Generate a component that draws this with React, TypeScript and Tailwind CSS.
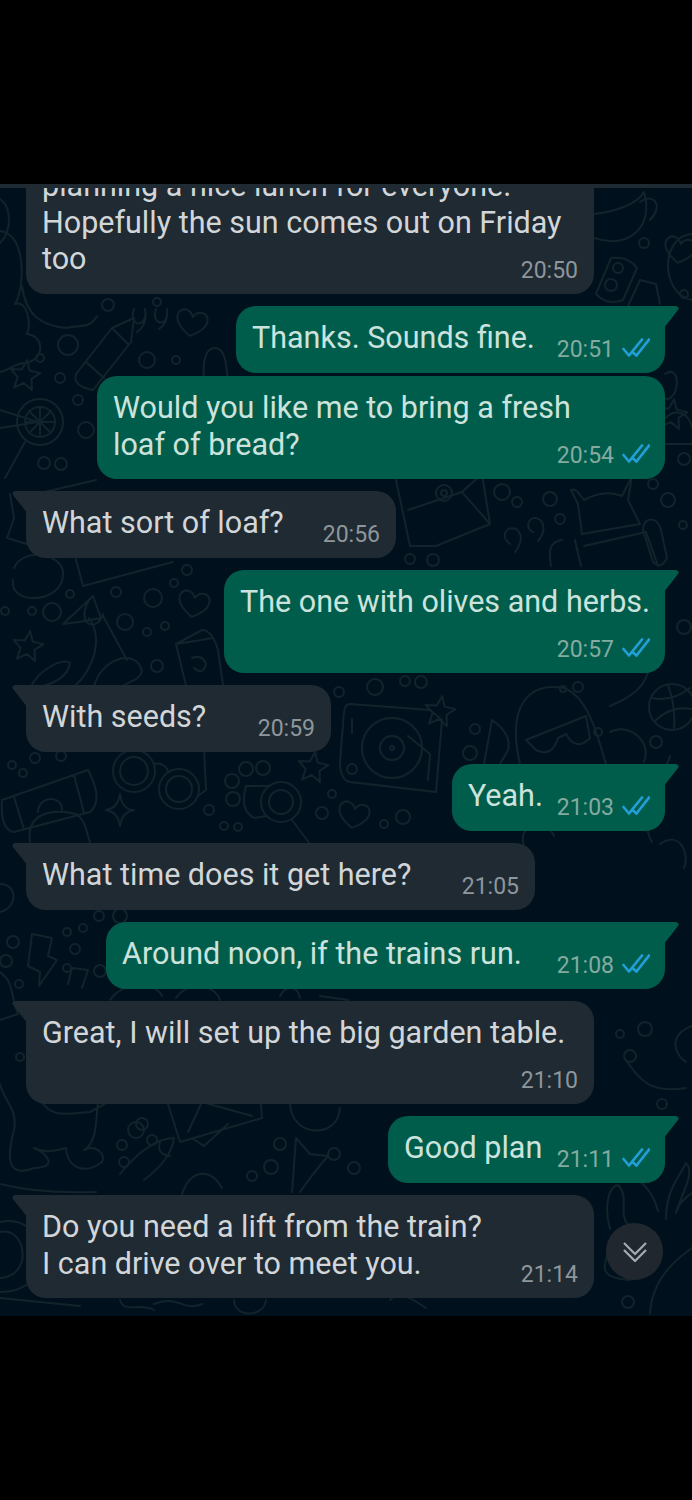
import { clsx } from 'clsx';

type Message = {
  lines: string[];
  time: string;
  mine?: boolean;
  tail?: boolean;
  size: string;
  gap: string;
};

const messages: Message[] = [
  { lines: ['planning a nice lunch for everyone.', 'Hopefully the sun comes out on Friday', 'too'], time: '20:50', size: 'w-[568px] h-[140px]', gap: '-mt-[30px]' },
  { lines: ['Thanks. Sounds fine.'], time: '20:51', mine: true, tail: true, size: 'w-[429px] h-[67px]', gap: 'mt-3' },
  { lines: ['Would you like me to bring a fresh', 'loaf of bread?'], time: '20:54', mine: true, size: 'w-[568px] h-[103px]', gap: 'mt-[3px]' },
  { lines: ['What sort of loaf?'], time: '20:56', tail: true, size: 'w-[370px] h-[67px]', gap: 'mt-3' },
  { lines: ['The one with olives and herbs.'], time: '20:57', mine: true, tail: true, size: 'w-[441px] h-[103px]', gap: 'mt-3' },
  { lines: ['With seeds?'], time: '20:59', tail: true, size: 'w-[305px] h-[67px]', gap: 'mt-3' },
  { lines: ['Yeah.'], time: '21:03', mine: true, tail: true, size: 'w-[213px] h-[67px]', gap: 'mt-3' },
  { lines: ['What time does it get here?'], time: '21:05', tail: true, size: 'w-[509px] h-[67px]', gap: 'mt-3' },
  { lines: ['Around noon, if the trains run.'], time: '21:08', mine: true, tail: true, size: 'w-[559px] h-[67px]', gap: 'mt-3' },
  { lines: ['Great, I will set up the big garden table.'], time: '21:10', tail: true, size: 'w-[568px] h-[103px]', gap: 'mt-3' },
  { lines: ['Good plan'], time: '21:11', mine: true, tail: true, size: 'w-[277px] h-[67px]', gap: 'mt-3' },
  { lines: ['Do you need a lift from the train?', 'I can drive over to meet you.'], time: '21:14', tail: true, size: 'w-[568px] h-[103px]', gap: 'mt-3' },
];

// small bubbles scattered between the doodles: x, y, radius
const dots = [
  [108, 121, 6], [68, 161, 10], [157, 118, 4], [147, 176, 8], [176, 176, 4], [60, 194, 5], [78, 216, 5], [86, 246, 8],
  [44, 279, 6], [61, 280, 6], [40, 174, 4], [299, 59, 5], [308, 79, 3], [644, 59, 5], [684, 110, 4], [684, 275, 6],
  [502, 308, 8], [517, 318, 5], [550, 315, 7], [560, 335, 5], [653, 300, 5], [668, 316, 7], [683, 341, 4], [410, 375, 5],
  [433, 376, 6], [70, 410, 4], [116, 408, 5], [153, 414, 9], [52, 428, 9], [32, 427, 4], [5, 427, 4], [125, 438, 8],
  [147, 448, 4], [165, 442, 4], [157, 482, 6], [187, 386, 5], [174, 399, 4], [375, 503, 8], [405, 497, 5], [421, 498, 6],
  [475, 545, 5], [470, 569, 7], [578, 503, 5], [563, 505, 3], [598, 548, 4], [656, 558, 6], [684, 443, 7], [339, 508, 5],
  [35, 574, 5], [61, 572, 5], [12, 581, 4], [23, 589, 4], [209, 626, 5], [224, 642, 4], [238, 643, 4], [322, 629, 6],
  [332, 610, 4], [352, 585, 5], [384, 640, 4], [403, 633, 7], [99, 732, 5], [120, 732, 7], [67, 748, 4], [83, 744, 4],
  [13, 758, 6], [6, 777, 6], [75, 765, 5], [67, 784, 4], [100, 787, 6], [19, 800, 4], [20, 873, 4], [142, 940, 6],
  [136, 946, 8], [152, 956, 5], [122, 961, 5], [124, 978, 5], [280, 960, 6], [271, 983, 7], [252, 992, 5], [334, 970, 6],
  [354, 984, 6], [628, 1118, 6], [662, 920, 5], [630, 872, 6], [620, 850, 4], [645, 845, 7],
];

const stars = [[25, 191], [28, 462], [313, 583], [440, 527], [672, 230]];
const hearts = [[192, 138], [194, 419], [354, 630], [680, 65]];

function Doodles() {
  return (
    <svg className="absolute inset-0 h-full w-full" viewBox="0 0 692 1132" fill="none" stroke="#11242b" strokeWidth="2" strokeLinecap="round" strokeLinejoin="round">
      {dots.map(([x, y, r], i) => <circle key={i} cx={x} cy={y} r={r} />)}
      {stars.map(([x, y], i) => (
        <path key={i} transform={`translate(${x} ${y}) rotate(8)`} d="M0-15 4-5 15-4 7 3 9 14 0 8-9 14-7 3-15-4-4-5Z" />
      ))}
      {hearts.map(([x, y], i) => (
        <path key={i} transform={`translate(${x} ${y}) rotate(10)`} d="M0 14C-10 8-17 1-15-6-12-14-3-12 0-5 3-12 13-13 15-5 16 2 9 9 0 14Z" />
      ))}
      {/* cloud and curls by the first bubble */}
      <path d="M0 15c12 8 12 32 0 44M0 47c28 3 24 60 15 73 13-4 16 20 12 30 18 2 18 26-2 29-10 0-17 8-25 9M22 102c4 30 20 40 45 42 12-4 22 2 30-12" />
      <path d="M134 125c-6 14 8 20 11 8m0-8c2 12-2 19-8 23M156 125c-5 14 8 18 11 8m0-8c1 12-3 17-8 20" />
      {/* crayon */}
      <path d="m76 190 36-46 22-10-3 24-38 48q-21-4-17-16Zm10-12 18 16m8-50 16 16" />
      <path d="M205 204c-4-28 1-40 10-40s12 12 13 40" />
      {/* bike wheel */}
      <circle cx="40" cy="238" r="23" /><circle cx="40" cy="238" r="15" />
      <path d="M40 223v30m-15-15h30M29 227l22 22m0-22-22 22M0 226l38 12-38 6m26 12L5 294" />
      {/* mug and traffic shapes on the right */}
      <path d="M594 30c20-2 44-10 50-22 10 34-14 58-50 46M640 18c14-10 24 4 10 18" />
      <path d="m596 110 15-36q18-2 26 10l-14 32q-16 6-27-6Zm32 12 12-26 16 4 4 20M692 50c-32 2-32 60 0 66" />
      <circle cx="618" cy="84" r="5" /><circle cx="611" cy="101" r="6" />
      <path d="M665 190c18-12 14 32-2 24m3 20c12-14 32 0 26 26h-26" />
      {/* parcel */}
      <path d="m396 296 14 66h26l54-22-8-50-20 18-54 18m54-18 28 32" />
      <circle cx="444" cy="309" r="8" /><circle cx="444" cy="309" r="3" />
      <path d="M515 368c7-9 8-18 1-23-10-4-16 8-6 15m28-3c8-9 7-21-2-23-8-1-11 10-3 14" />
      {/* robot */}
      <path d="m582 350-4-30-7-14c5-2 8 4 13 10q20-11 38-4l10-20-4 24 12 24Zm2 12 62-14 12 34m-96-26c-12 2-14 10-11 26m24-26 6 26m62-36c0-14 15-14 18 0l6 28q-6 12-14 4Z" />
      <path d="m75 372 8 30 90-24m-78-10 70-14M14 384c10-22 50-14 49 6 0 30-54 32-50 6M10 310l4 24-7 20 20 6M96 296l-60 14" />
      {/* fish tail and whale */}
      <path d="m63 440 30-28 8 22-22 4Zm26-24c-14 24 8 34 14 14m-14 4c14 20 6 50-16 70m30-72 24 44M30 505c8-20 34-32 40-26-2 14-16 22-40 26Zm64-2c6-28 42-40 48-16-2 10-14 10-20 16" />
      {/* book */}
      <path d="m176 460 26-14q10 0 16 20l6 42m-48-48 12 50m-12-50q26-4 36-6M192 474q10-4 14 6-3 12-12 4m6 22 14-4" />
      {/* turntable */}
      <path d="m350 520 80 6 12 10-6 72-86-10q-10-2-10-20l4-50q1-8 6-8Z" />
      <circle cx="392" cy="564" r="30" /><circle cx="392" cy="564" r="12" /><circle cx="392" cy="564" r="2" />
      <path d="m408 552 22 18-2 26M352 535v14" />
      {/* binoculars */}
      <circle cx="134" cy="587" r="21" /><circle cx="134" cy="587" r="14" />
      <circle cx="179" cy="605" r="20" /><circle cx="179" cy="605" r="13" />
      <path d="M154 580c8-2 14 4 14 8m36-24 2 42-8 6" />
      {/* paw and magnifier */}
      <circle cx="232" cy="597" r="7" /><circle cx="233" cy="615" r="7" /><circle cx="246" cy="585" r="7" /><circle cx="263" cy="584" r="7" />
      <circle cx="281" cy="618" r="20" /><circle cx="281" cy="618" r="12" />
      <path d="M270 602h-24q-7 24 8 32l12-2m26 4 18 24" />
      {/* rolled mat */}
      <path d="M2 616q-2 30 12 32l76-20q14-12-2-42Zm12-3 10 32m50-54 10 38M38 628c0-16 24-18 24-2M120 610q2 16 14 16-12 2-14 16-2-14-14-16 12-2 14-16M30 658c-4-28 20-34 46-28 10 6 10 18 14 28" />
      {/* face with glasses */}
      <path d="M520 580c-14-60 10-82 44-76 26 10 34 50 46 90M526 556l60-24 4 22q-14 14-24-4l-8 4q-6 20-22 12Zm84-34c24-10 34-20 38-34m-38 60c20-10 42 10 34 30" />
      <circle cx="672" cy="523" r="23" /><path d="M652 514q20 4 38-10M655 537q16-16 37-12M668 501q8 22 6 45M484 580l8-44q20 14 16 30l-8 14" />
      {/* bolt */}
      <path d="m32 750 20 4-4 18 9 4-18 26 1-14-12-6ZM0 700c18 0 18 24 0 28m0 60c14 10 10 22 18 42l-18 6M68 800l4-16 16 2-6 18" />
      <path d="M110 816c14-20 46-18 52-4m14 2c14-20 40-12 44 2m60-4c6-12 18-10 20 2M320 812l28 4" />
      {/* dog */}
      <path d="M0 900c4 18 18 24 14 46-8 30-6 48 20 38 24 0 14-14 0-20 12 6 24 2 32 0 2 22 20 26 36 14 4-8-6-18-18-12 14-8 12-34 14-50m-58 0c12 18 24 14 50 12l22-12" />
      <path d="m168 920 12 38 82-24-2-26m-72 40 14-30 50 14M120 990c16-20 36-36 54-36-2 16-14 30-30 42m16-38q-4 12 10 14M182 1010c10-28 30-24 40-6m-30-50 12 8 24-22" />
      <path d="m292 1008 4-54 14 16 18 2q-14 16-28 36M290 918c0 36 48 38 50 6" />
      <path d="M0 1000q40 10 96 8M0 1038c50-10 60 70 0 70m0-60c26-6 34 44 0 46m0 20 80 8M120 1116c4 14 20 2 34 10m0-6c22-10 30 8 48 0M234 1116c0 18 30 18 32 0M390 1116c10-12 26 2 36 8" />
      {/* leaves on the lower right */}
      <path d="M610 1045c-6-22-2-42 8-44 12 12 0 28 10 40m-12-50c24-4 38 20 42 36m8 8c0-28 12-40 20-56 10 10-6 34-10 50 4-14 16-20 26-26M612 1060c-10 24-14 34 18 36m20 34c2-40 34-60 42-66M692 842c-26 10-16 30-6 36m-60-2c14 20 24 34 60 28" />
      <path d="M660 660c20-14 30 10 24 24m-160-22c-8-24 24-26 30-10m98 6c-16-26 10-60 18-86" />
    </svg>
  );
}

function Ticks() {
  return (
    <svg className="mr-px mb-[5px] ml-2 h-5 w-[28px] self-center" viewBox="0 0 28 20" fill="none" stroke="#219fd6" strokeWidth="2.7" strokeLinecap="round" strokeLinejoin="round">
      <path d="m1.5 11 5.5 6.5L20 1.5M11 14.5l3.5 3L27 1.5" />
    </svg>
  );
}

function Tail({ mine }: { mine?: boolean }) {
  return (
    <svg className={clsx('absolute top-0 h-[22px] w-4', mine ? '-right-[14px] text-[#005d4b]' : '-left-[14px] -scale-x-100 text-[#1f2a32]')} viewBox="0 0 16 22" fill="currentColor">
      <path d="M0 0h13q4 1 2 4L2 20.5V22H0Z" />
    </svg>
  );
}

function Bubble({ lines, time, mine, tail, size, gap }: Message) {
  return (
    <div
      className={clsx(
        'relative flex shrink-0 flex-col rounded-[20px] px-4 pt-[14px]',
        size,
        gap,
        mine ? 'self-end bg-[#005d4b] text-[#cce3dd]' : 'self-start bg-[#1f2a32] text-[#d2d6d9]',
        tail && (mine ? 'rounded-tr-none' : 'rounded-tl-none'),
      )}
    >
      {tail && <Tail mine={mine} />}
      {lines.map(line => (
        <p key={line} className="whitespace-nowrap text-[30.5px] leading-[36.5px]">{line}</p>
      ))}
      <div className={clsx('absolute bottom-[9px] flex h-7 items-center text-[23px] leading-7', mine ? 'right-[14px] text-[#83aba1]' : 'right-[16px] text-[#8e969c]')}>
        <span>{time}</span>
        {mine && <Ticks />}
      </div>
    </div>
  );
}

export default function App() {
  return (
    <main className="h-[1500px] w-[692px] overflow-hidden bg-black pt-[184px] font-[Roboto,sans-serif]">
      <section className="relative h-[1132px] overflow-hidden bg-[#00111d]">
        <Doodles />
        <div className="relative flex flex-col pr-[27px] pl-[26px]">
          {messages.map(m => <Bubble key={m.time} {...m} />)}
        </div>
        <div className="absolute top-0 left-0 h-1 w-full bg-[#202a32]" />
        <button className="absolute right-[29px] bottom-[36px] flex size-[57px] items-center justify-center rounded-full bg-[#20272f]">
          <svg className="h-5 w-6" viewBox="0 0 24 20" fill="none" stroke="#a4abb0" strokeWidth="2.2">
            <path d="m1 1 11 11L23 1M1 8l11 11L23 8" />
          </svg>
        </button>
      </section>
    </main>
  );
}
